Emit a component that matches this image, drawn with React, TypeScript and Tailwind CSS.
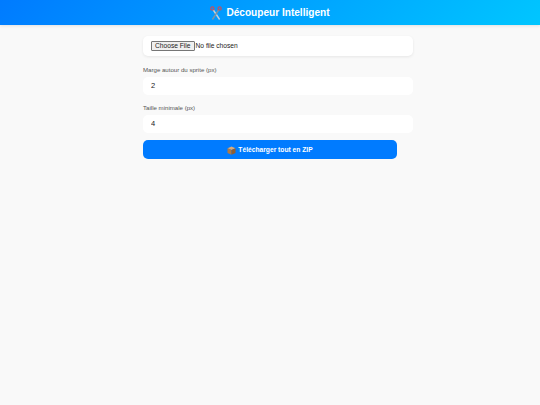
function ScissorsIcon() {
  return (
    <svg width="12" height="14" viewBox="0 0 12 14" fill="none" className="shrink-0">
      <path d="M3 3.5 L9.6 13.5" stroke="#c3d0da" strokeWidth="1.4" />
      <path d="M9 3.5 L2.4 13.5" stroke="#7f93a3" strokeWidth="1.4" />
      <circle cx="2.4" cy="2.4" r="1.6" stroke="#c4505e" strokeWidth="1.2" />
      <circle cx="9.6" cy="2.4" r="1.6" stroke="#c4505e" strokeWidth="1.2" />
    </svg>
  );
}

function BoxIcon() {
  return (
    <svg width="9" height="9" viewBox="0 0 9 9" className="shrink-0">
      <path d="M4.5 0.5 L8.5 2.2 L4.5 4 L0.5 2.2 Z" fill="#d9ab7a" />
      <path d="M0.5 2.2 L4.5 4 V8.7 L0.5 7 Z" fill="#b07a45" />
      <path d="M8.5 2.2 L4.5 4 V8.7 L8.5 7 Z" fill="#8f5f33" />
    </svg>
  );
}

function NumberField({ label, value }: { label: string; value: number }) {
  return (
    <div className="flex flex-col">
      <label className="mb-[3px] text-[6.1px] leading-[8px] text-[#555]">{label}</label>
      <input
        type="text"
        readOnly
        value={value}
        className="box-content h-[17px] w-full rounded-[5px] bg-white px-[8px] pb-[1px] text-[7.5px] text-[#222] outline-none"
      />
    </div>
  );
}

export default function App() {
  return (
    <div className="min-h-[405px] bg-[#f9f9f9] font-['Liberation_Sans',Arial,sans-serif]">
      <header className="flex h-[25px] items-center justify-center gap-[4px] bg-[linear-gradient(135deg,#007bff,#00c6ff)] shadow-[0_1px_3px_rgba(0,0,0,0.1)]">
        <ScissorsIcon />
        <h1 className="text-[10.1px] font-bold text-white">Découpeur Intelligent</h1>
      </header>
      <main className="mx-auto mt-[11px] flex w-[254px] flex-col">
        <div className="box-content flex h-[20px] w-full items-center rounded-[5px] bg-white px-[8px] shadow-[0_1px_3px_rgba(0,0,0,0.08)]">
          <input
            type="file"
            className="text-[6.67px] text-[#222] file:mr-[1px] file:h-[10px] file:rounded-[1px] file:border file:border-[#767676] file:bg-[#efefef] file:px-[3px] file:text-[6.67px] file:leading-[8px] file:text-[#222]"
          />
        </div>
        <div className="mt-[10px] flex flex-col gap-[9px]">
          <NumberField label="Marge autour du sprite (px)" value={2} />
          <NumberField label="Taille minimale (px)" value={4} />
        </div>
        <button className="mt-[7px] flex h-[19px] w-full items-center justify-center gap-[2px] rounded-[5px] bg-[#007bff] pt-[1px] text-[6.7px] font-bold text-white">
          <BoxIcon />
          Télécharger tout en ZIP
        </button>
      </main>
    </div>
  );
}
